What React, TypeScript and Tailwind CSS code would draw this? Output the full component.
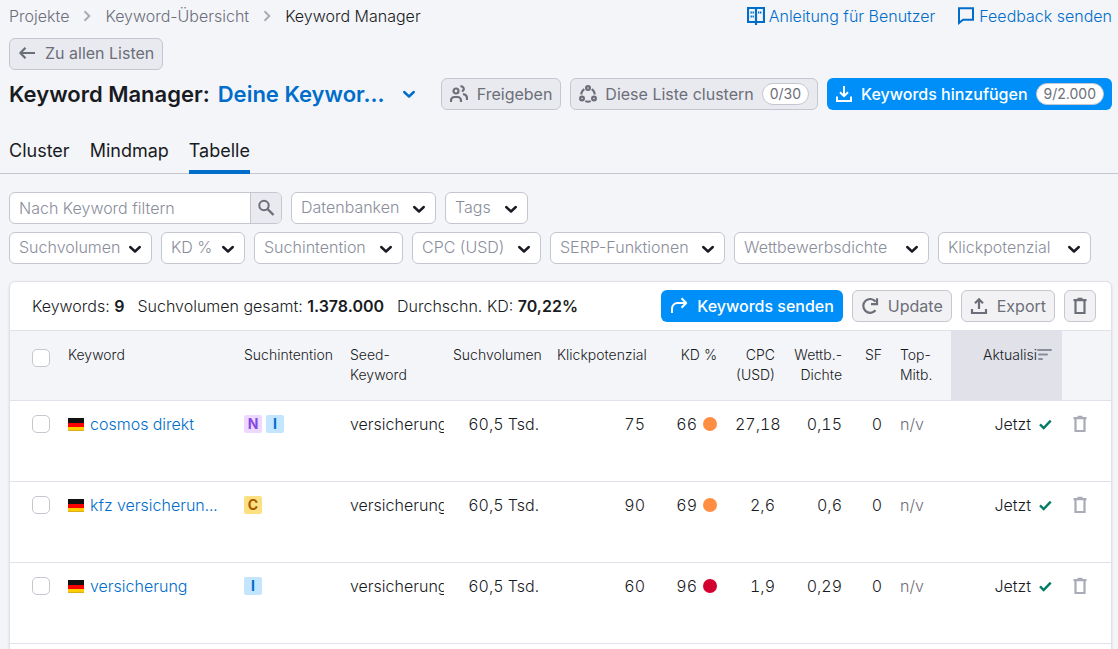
import React, { useState } from 'react';

type Intent = 'N' | 'I' | 'C';

interface KeywordRow {
  keyword: string;
  intents: Intent[];
  seed: string;
  volume: string;
  potential: string;
  kd: number;
  cpc: string;
  density: string;
  serp: string;
  competitors: string;
  updated: string;
}

const rows: KeywordRow[] = [
  { keyword: 'cosmos direkt', intents: ['N', 'I'], seed: 'versicherung', volume: '60,5 Tsd.', potential: '75', kd: 66, cpc: '27,18', density: '0,15', serp: '0', competitors: 'n/v', updated: 'Jetzt' },
  { keyword: 'kfz versicherun...', intents: ['C'], seed: 'versicherung', volume: '60,5 Tsd.', potential: '90', kd: 69, cpc: '2,6', density: '0,6', serp: '0', competitors: 'n/v', updated: 'Jetzt' },
  { keyword: 'versicherung', intents: ['I'], seed: 'versicherung', volume: '60,5 Tsd.', potential: '60', kd: 96, cpc: '1,9', density: '0,29', serp: '0', competitors: 'n/v', updated: 'Jetzt' },
];

const intentStyles: Record<Intent, string> = {
  N: 'bg-[#edd9ff] text-[#8649e1]',
  I: 'bg-[#c4e5fe] text-[#006dca]',
  C: 'bg-[#fce081] text-[#a75800]',
};

interface IconProps {
  className?: string;
  children: React.ReactNode;
}

const Icon: React.FC<IconProps> = ({ className = '', children }) => (
  <svg
    className={`h-[18px] w-[18px] shrink-0 ${className}`}
    viewBox="0 0 18 18"
    fill="none"
    stroke="currentColor"
    strokeWidth={2}
    aria-hidden="true"
  >
    {children}
  </svg>
);

const BookIcon = () => (
  <Icon>
    <path d="M1 1h16v14H1zM9 1v17" strokeWidth={2.2} />
    <path d="M3.500 5.500h4M3.500 9.500h4M11 5.500h4" strokeWidth={1.8} strokeDasharray="1.400 0.600" />
  </Icon>
);

const FeedbackIcon = () => (
  <Icon>
    <path d="M2 1.200h14v11.600H6L2 16z" />
  </Icon>
);

const BackIcon = () => (
  <Icon>
    <path d="M17 9H2.500M7.500 3.800 2.300 9l5.200 5.200" strokeWidth={2.2} strokeLinejoin="round" />
  </Icon>
);

const UsersIcon = () => (
  <Icon>
    <circle cx="6" cy="6" r="2.500" strokeWidth={2.2} />
    <path d="M1 17v-1.500A3.500 3.500 0 0 1 4.500 12h3a3.500 3.500 0 0 1 3.500 3.500V17" strokeWidth={2.2} />
    <path d="M10.500 1.600a2.400 2.400 0 1 1 1.300 4.600M13 9.200c2.400.2 4 1.800 4 4.300V15" strokeWidth={2.2} />
  </Icon>
);

const ClusterIcon = () => (
  <Icon>
    <circle cx="9" cy="3" r="1.900" strokeWidth={2.2} />
    <circle cx="3" cy="13.500" r="1.900" strokeWidth={2.2} />
    <circle cx="15" cy="13.500" r="1.900" strokeWidth={2.2} />
    <path d="M5.300 4.200A7 7 0 0 0 2.200 9.500M12.700 4.200a7 7 0 0 1 3.100 5.300M6.300 16.200a7 7 0 0 0 5.400 0" />
  </Icon>
);

const DownloadIcon = () => (
  <Icon>
    <path d="M9 1v9.500M5 7.200l4 4 4-4M2 11.500V16h14v-4.500" />
  </Icon>
);

const UploadIcon = () => (
  <Icon>
    <path d="M9 12V3M5 6.300l4-4 4 4M2 12v4h14v-4" strokeWidth={2.2} />
  </Icon>
);

const SearchIcon = () => (
  <Icon>
    <circle cx="7" cy="6.500" r="4.700" />
    <path d="m10.500 10 6 6" strokeWidth={2.4} />
  </Icon>
);

const SendIcon = () => (
  <Icon>
    <path d="M2 16v-4.500A5.500 5.500 0 0 1 7.500 6H16M11.500 1.300 16.200 6l-4.700 4.700" strokeLinejoin="round" />
  </Icon>
);

const RefreshIcon = () => (
  <Icon>
    <path d="M14.500 13.300A6.900 6.900 0 1 1 14.600 4.600M16 1.200v6h-6" strokeWidth={2.2} />
  </Icon>
);

const TrashIcon = () => (
  <Icon>
    <path d="M2.500 3.200h13M6.500 1.800h5M4.500 3.500V16h9V3.500" strokeWidth={2.2} />
  </Icon>
);

const CheckIcon = () => (
  <svg className="h-3.5 w-3.5 shrink-0 text-[#007c65]" viewBox="0 0 14 14" fill="none" stroke="currentColor" strokeWidth={2.4} aria-hidden="true">
    <path d="m1 7.300 3.700 3.700 7-7.400" />
  </svg>
);

const SortIcon = () => (
  <svg className="h-4 w-4 shrink-0 text-[#8a8e9b]" viewBox="0 0 16 16" stroke="currentColor" strokeWidth={2} strokeLinecap="round" aria-hidden="true">
    <path d="M1 3h13M2 7.500h8M2 12h3" />
  </svg>
);

const ChevronDown: React.FC<{ className?: string }> = ({ className = '' }) => (
  <svg className={`h-3.5 w-3.5 shrink-0 ${className}`} viewBox="0 0 14 14" fill="none" stroke="currentColor" strokeWidth={2.4} strokeLinecap="round" strokeLinejoin="round" aria-hidden="true">
    <path d="m2.200 5 4.800 4.500L11.800 5" />
  </svg>
);

const ChevronRight = () => (
  <svg className="h-3 w-2 text-[#a9abb6]" viewBox="0 0 8 12" fill="none" stroke="currentColor" strokeWidth={2} aria-hidden="true">
    <path d="m1.500 1.200 4.800 4.800-4.800 4.800" />
  </svg>
);

const GermanFlag = () => (
  <svg className="h-[13px] w-4 shrink-0" viewBox="0 0 16 13" aria-hidden="true">
    <path d="M0 0h16v5H0z" fill="#111" />
    <path d="M0 5h16v4H0z" fill="#f00" />
    <path d="M0 9h16v4H0z" fill="#fc0" />
    <path d="M0 12h16v1H0z" fill="#d9b01c" />
  </svg>
);

interface FilterSelectProps {
  label: string;
  width: string;
}

const FilterSelect: React.FC<FilterSelectProps> = ({ label, width }) => (
  <div className={`relative ${width}`}>
    <select
      aria-label={label}
      className="h-8 w-full appearance-none rounded-md border border-[#c4c7cf] bg-white pb-0.5 pl-[9px] text-[#8a8e9b]"
    >
      <option>{label}</option>
    </select>
    <ChevronDown className="pointer-events-none absolute top-2.5 right-2.5" />
  </div>
);

const secondaryButton = 'flex h-8 items-center rounded-md border border-[#c4c7cf] bg-[#e9eaef] font-normal whitespace-nowrap text-[#6c6e79]';
const toolbarButton = 'flex h-8 items-center rounded-md border border-[#c4c7cf] bg-[#f2f2f5] font-normal whitespace-nowrap text-[#6c6e79]';
const primaryButton = 'flex h-8 items-center rounded-md bg-[#008ff8] font-medium whitespace-nowrap text-white';
const counter = 'flex h-[22px] items-center rounded-full border border-[#c4c7cf] bg-white px-[7px] text-sm font-normal text-[#6c6e79]';
const checkbox = 'block h-[18px] w-[18px] appearance-none rounded-[5px] border border-[#c4c7cf] bg-white checked:bg-[#008ff8]';

const App: React.FC = () => {
  const [query, setQuery] = useState('');
  const [selected, setSelected] = useState<string[]>([]);

  const toggleRow = (keyword: string) => {
    setSelected((prev) => (prev.includes(keyword) ? prev.filter((k) => k !== keyword) : [...prev, keyword]));
  };

  const toggleAll = () => {
    setSelected(selected.length === rows.length ? [] : rows.map((r) => r.keyword));
  };

  return (
    <div className="h-screen overflow-hidden bg-[#f4f5f9] font-['Inter',sans-serif] text-base font-light text-[#191b23]">
      <header className="pr-1.5 pl-[9px]">
        <div className="flex items-center pt-1">
          <nav aria-label="Breadcrumb" className="flex items-center gap-3.5">
            <a href="#" className="text-[#6c6e79]">Projekte</a>
            <ChevronRight />
            <a href="#" className="text-[#6c6e79]">Keyword-Übersicht</a>
            <ChevronRight />
            <span>Keyword Manager</span>
          </nav>
          <div className="ml-auto flex items-center gap-[22px] text-[#006dca]">
            <a href="#" className="flex items-center gap-1">
              <BookIcon />
              Anleitung für Benutzer
            </a>
            <a href="#" className="flex items-center gap-1">
              <FeedbackIcon />
              Feedback senden
            </a>
          </div>
        </div>

        <button type="button" className={`${secondaryButton} mt-2.5 gap-[9px] px-2 pb-0.5`}>
          <BackIcon />
          Zu allen Listen
        </button>

        <div className="mt-2 flex items-center gap-[9px]">
          <h1 className="flex items-center text-[22px] leading-8 font-semibold whitespace-nowrap">
            Keyword Manager:
            <button type="button" className="ml-2 flex items-center gap-[18px] text-[#006dca]">
              Deine Keywor...
              <ChevronDown />
            </button>
          </h1>
          <button type="button" className={`${secondaryButton} ml-auto gap-[9px] px-2`}>
            <UsersIcon />
            Freigeben
          </button>
          <button type="button" className={`${secondaryButton} gap-2 px-2`}>
            <ClusterIcon />
            Diese Liste clustern
            <span className={counter}>0/30</span>
          </button>
          <button type="button" className={`${primaryButton} gap-2 px-2`}>
            <DownloadIcon />
            Keywords hinzufügen
            <span className={counter}>9/2.000</span>
          </button>
        </div>
      </header>

      <nav aria-label="Ansicht" className="mt-[18px] flex gap-5 border-b border-[#c4c7cf] pl-[9px] text-lg font-normal">
        <a href="#" className="pt-[9px]">Cluster</a>
        <a href="#" className="pt-[9px]">Mindmap</a>
        <a href="#" aria-current="page" className="-mb-px border-b-4 border-[#006dca] pt-[9px] pb-[5px]">Tabelle</a>
      </nav>

      <main className="pr-1.5 pl-[9px]">
        <div className="mt-[18px] flex flex-wrap gap-x-[9px] gap-y-2">
          <form className="flex h-8 w-[273px] overflow-hidden rounded-md border border-[#c4c7cf] bg-white" onSubmit={(e) => e.preventDefault()}>
            <input
              type="text"
              aria-label="Nach Keyword filtern"
              placeholder="Nach Keyword filtern"
              value={query}
              onChange={(e) => setQuery(e.target.value)}
              className="min-w-0 flex-1 pl-[9px] outline-none placeholder:text-[#8a8e9b]"
            />
            <button type="submit" aria-label="Suchen" className="flex w-[31px] items-center justify-center border-l border-[#c4c7cf] bg-[#e9eaef] text-[#6c6e79]">
              <SearchIcon />
            </button>
          </form>
          <FilterSelect label="Datenbanken" width="w-[145px]" />
          <FilterSelect label="Tags" width="w-[83px]" />
        </div>
        <div className="mt-2 flex flex-wrap gap-x-[9px] gap-y-2">
          <FilterSelect label="Suchvolumen" width="w-[143px]" />
          <FilterSelect label="KD %" width="w-[84px]" />
          <FilterSelect label="Suchintention" width="w-[149px]" />
          <FilterSelect label="CPC (USD)" width="w-[129px]" />
          <FilterSelect label="SERP-Funktionen" width="w-[175px]" />
          <FilterSelect label="Wettbewerbsdichte" width="w-[195px]" />
          <FilterSelect label="Klickpotenzial" width="w-[153px]" />
        </div>

        <section className="mt-[17px] rounded-t-md border border-[#e0e1e9] bg-white pb-6 shadow-sm">
          <div className="flex h-12 items-center gap-[9px] pr-[15px] pl-[22px]">
            <div className="flex gap-[13px] whitespace-nowrap">
              <span>Keywords: <b className="font-semibold">9</b></span>
              <span>Suchvolumen gesamt: <b className="font-semibold">1.378.000</b></span>
              <span>Durchschn. KD: <b className="font-semibold">70,22%</b></span>
            </div>
            <button type="button" className={`${primaryButton} ml-auto gap-[9px] px-[9px]`}>
              <SendIcon />
              Keywords senden
            </button>
            <button type="button" className={`${toolbarButton} gap-[9px] px-2`}>
              <RefreshIcon />
              Update
            </button>
            <button type="button" className={`${toolbarButton} gap-[9px] px-2`}>
              <UploadIcon />
              Export
            </button>
            <button type="button" aria-label="Löschen" className={`${toolbarButton} px-1.5`}>
              <TrashIcon />
            </button>
          </div>

          <table className="w-full table-fixed border-collapse">
            <colgroup>
              <col className="w-[49px]" />
              <col />
              <col className="w-[106px]" />
              <col className="w-[103px]" />
              <col className="w-[104px]" />
              <col className="w-[106px]" />
              <col className="w-[72px]" />
              <col className="w-[58px]" />
              <col className="w-[67px]" />
              <col className="w-10" />
              <col className="w-[60px]" />
              <col className="w-[111px]" />
              <col className="w-[49px]" />
            </colgroup>
            <thead>
              <tr className="h-[70px] border-y border-[#e0e1e9] bg-[#f4f5f9] align-top text-sm [&>th]:px-[9px] [&>th]:pt-3.5 [&>th]:font-light">
                <th className="text-left">
                  <input type="checkbox" aria-label="Alle auswählen" checked={selected.length === rows.length} onChange={toggleAll} className={`${checkbox} mt-1 ml-[13px]`} />
                </th>
                <th className="text-left">Keyword</th>
                <th className="text-left">Suchintention</th>
                <th className="text-left">Seed-<br />Keyword</th>
                <th className="text-right">Suchvolumen</th>
                <th className="text-right">Klickpotenzial</th>
                <th className="text-right">KD %</th>
                <th className="text-right">CPC<br />(USD)</th>
                <th className="text-right">Wettb.-<br />Dichte</th>
                <th className="text-right">SF</th>
                <th className="text-left">Top-<br />Mitb.</th>
                <th className="bg-[#e0e1e9]" aria-sort="descending">
                  <button type="button" className="ml-auto flex items-center">
                    Aktualisi
                    <SortIcon />
                  </button>
                </th>
                <th />
              </tr>
            </thead>
            <tbody>
              {rows.map((row) => (
                <tr key={row.keyword} className="h-[81px] border-b border-[#e0e1e9] align-top tabular-nums [&>td]:px-[9px] [&>td]:pt-[11px]">
                  <td>
                    <input
                      type="checkbox"
                      aria-label={row.keyword}
                      checked={selected.includes(row.keyword)}
                      onChange={() => toggleRow(row.keyword)}
                      className={`${checkbox} mt-[3px] ml-[13px]`}
                    />
                  </td>
                  <td>
                    <a href="#" className="flex items-center gap-1.5 whitespace-nowrap text-[#006dca]">
                      <GermanFlag />
                      {row.keyword}
                    </a>
                  </td>
                  <td>
                    <div className="flex h-6 items-center gap-1">
                      {row.intents.map((intent) => (
                        <span key={intent} className={`flex h-[18px] w-[18px] items-center justify-center rounded-xs text-sm font-bold ${intentStyles[intent]}`}>
                          {intent}
                        </span>
                      ))}
                    </div>
                  </td>
                  <td>
                    <div className="-mr-[9px] overflow-hidden">{row.seed}</div>
                  </td>
                  <td className="text-right whitespace-nowrap">{row.volume}</td>
                  <td className="text-right">{row.potential}</td>
                  <td>
                    <div className="flex items-center justify-end gap-1.5">
                      {row.kd}
                      <span className={`h-3.5 w-3.5 rounded-full ${row.kd > 84 ? 'bg-[#d1002f]' : 'bg-[#ff8e43]'}`} />
                    </div>
                  </td>
                  <td className="text-right whitespace-nowrap">{row.cpc}</td>
                  <td className="text-right">{row.density}</td>
                  <td className="text-right">{row.serp}</td>
                  <td className="text-[#6c6e79]">{row.competitors}</td>
                  <td>
                    <div className="flex items-center justify-end gap-2">
                      {row.updated}
                      <CheckIcon />
                    </div>
                  </td>
                  <td>
                    <button type="button" aria-label={`${row.keyword} löschen`} className="flex h-6 items-center text-[#a9abb6]">
                      <TrashIcon />
                    </button>
                  </td>
                </tr>
              ))}
            </tbody>
          </table>
        </section>
      </main>
    </div>
  );
};

export default App;
